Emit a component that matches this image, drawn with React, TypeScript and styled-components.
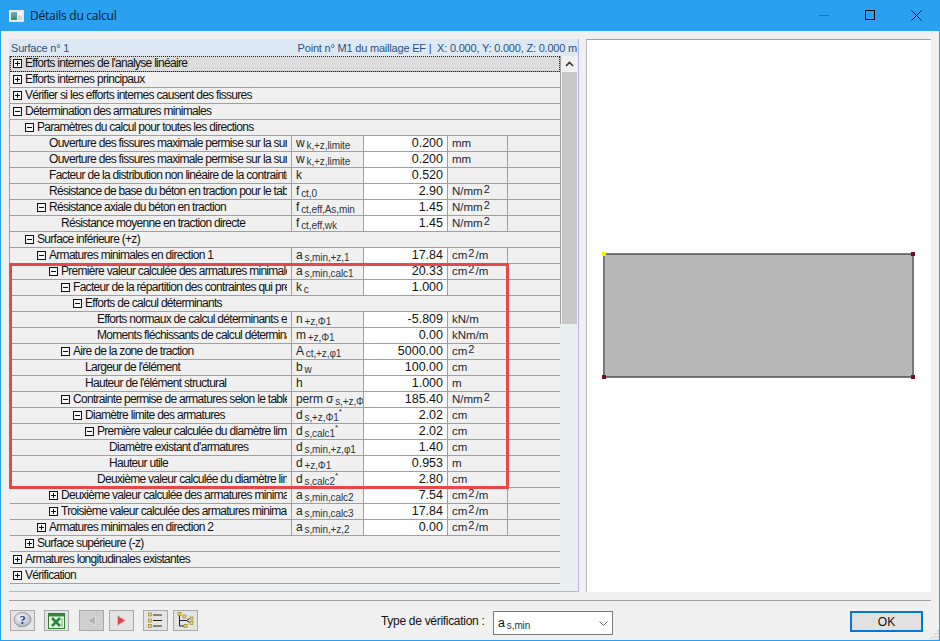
import React from "react";
import styled, { createGlobalStyle } from "styled-components";

const Global = createGlobalStyle`
  html, body { margin: 0; padding: 0; background: #f0f0f0; }
  body { font-family: "Liberation Sans", Arial, sans-serif; }
`;

const Win = styled.div`
  width: 940px; height: 641px; box-sizing: border-box; position: relative;
  display: flex; flex-direction: column; background: #f0f0f0;
  border: 1px solid #2aa0f0; border-top: 0; overflow: hidden; color: #111;
`;
const TitleBar = styled.div`
  height: 31px; flex: none; background: #2aa0f0; display: flex; align-items: center;
  margin: 0 -1px; padding-left: 9px;
`;
const Title = styled.span`
  margin-left: 6px; font: 12px "Open Sans", "Liberation Sans", sans-serif; letter-spacing: -0.25px; color: #101820;
`;
const WinButtons = styled.div`margin-left: auto; display: flex; padding-right: 1px;`;
const WinBtn = styled.div`
  width: 46px; height: 31px; display: flex; align-items: center; justify-content: center;
`;
const Main = styled.div`
  flex: none; height: 553px; margin: 8px 8px 0 8px; display: flex; gap: 7px;
`;
const Left = styled.div`
  width: 570px; flex: none; display: flex; flex-direction: column;
  border-right: 1px solid #b4b4e8; border-bottom: 1px solid #b4b4e8; box-sizing: border-box;
  position: relative;
`;
const Header = styled.div`
  height: 17px; flex: none; background: #dde8f5; display: flex; justify-content: space-between; align-items: center;
  padding: 0 1px 0 2px; font-size: 11px; color: #2c5078; letter-spacing: -0.2px;
`;
const Body = styled.div`flex: 1; display: flex; min-height: 0;`;
const Table = styled.div`
  width: 552px; flex: none; border-left: 1px solid #a0a0a0; border-right: 1px solid #a0a0a0; box-sizing: border-box;
`;
const Row = styled.div<{ $sel?: boolean }>`
  height: 16px; box-sizing: border-box; display: flex; position: relative;
  border-bottom: 1px solid #a0a0a0; background: ${p => (p.$sel ? "#dcdcdc" : "#f0f0f0")};
  ${p => p.$sel && "outline: 1px dotted #222; outline-offset: -1px;"}
`;
const NameCell = styled.div<{ $level: number; $toggle: boolean }>`
  width: 282px; flex: none; box-sizing: border-box; overflow: hidden; white-space: nowrap;
  display: flex; align-items: center; height: 15px; font-size: 12px; line-height: 15px; letter-spacing: -0.7px;
  padding-left: ${p => 3 + p.$level * 12 + (p.$toggle ? 0 : 12)}px;
  padding-right: 4px; border-right: 1px solid #a0a0a0;
`;
const GroupCell = styled(NameCell)`width: 100%; border-right: 0;`;
const Clip = styled.span`overflow: hidden; flex: 1; min-width: 0;`;
const Toggle = styled.svg`flex: none; width: 9px; height: 9px; margin-right: 3px;`;
const SymCell = styled.div`
  width: 72px; flex: none; box-sizing: border-box; padding-left: 4px; font-size: 12px; line-height: 15px; height: 15px;
  border-right: 1px solid #a0a0a0; white-space: nowrap; overflow: hidden; color: #222;
`;
const Main12 = styled.span`letter-spacing: -0.15px;`;
const Sub = styled.sub`
  font-size: 10px; vertical-align: baseline; position: relative; top: 2px; margin-left: 2px; line-height: 0; color: #2a3444; letter-spacing: -0.1px;
`;
const Sup = styled.sup`
  font-size: 8px; vertical-align: baseline; position: relative; top: -5px; line-height: 0;
`;
const ValueCell = styled.div`
  width: 84px; flex: none; box-sizing: border-box; background: #fff; text-align: right; padding-right: 4px;
  font-size: 12.5px; line-height: 15px; height: 15px; border-right: 1px solid #a0a0a0;
`;
const UnitCell = styled.div`
  width: 60px; flex: none; box-sizing: border-box; padding-left: 4px; font-size: 11.5px; line-height: 15px; height: 15px;
  border-right: 1px solid #a0a0a0; white-space: nowrap; color: #1c2430;
`;
const UnitSup = styled.span`
  font-size: 11px; vertical-align: baseline; position: relative; top: -2px; margin: 0 1px;
`;
const Scroll = styled.div`
  width: 15px; flex: none; margin-left: 1px; display: flex; flex-direction: column; height: 528px;
`;
const ScrollBtn = styled.div`
  height: 16px; flex: none; display: flex; align-items: center; justify-content: center;
`;
const Thumb = styled.div`height: 480px; flex: none; background: #c8c8c8;`;
const Track = styled.div`flex: 1;`;
const Strip = styled.div`flex: 1; background: #e9eef0;`;
const Highlight = styled.div`
  position: absolute; left: 0; top: 224px; width: 500px; height: 226px; box-sizing: border-box;
  border: 3px solid #e8474a; pointer-events: none;
`;
const Preview = styled.div`
  width: 345px; flex: none; background: #fff; border-top: 1px solid #a0a0a0; border-left: 1px solid #b8b8b8;
  box-sizing: border-box; height: 553px;
`;
const Sep = styled.div`height: 1px; flex: none; background: #a0a0a0; margin: 8px 8px 0 8px;`;
const Footer = styled.div`
  flex: 1; display: flex; align-items: flex-start; padding: 9px 8px 0 9px;
`;
const IconBtn = styled.div<{ $disabled?: boolean; $gap: number }>`
  width: 25px; height: 21px; box-sizing: border-box; flex: none; margin-right: ${p => p.$gap}px;
  border: 1px solid #a8a8a8; background: ${p => (p.$disabled ? "#cfcfcf" : "#e4e4e4")};
  display: flex; align-items: center; justify-content: center;
`;
const TypeLabel = styled.span`
  margin-left: 183px; width: 112px; flex: none; font-size: 12px; line-height: 22px; white-space: nowrap; letter-spacing: -0.3px;
`;
const Select = styled.div`
  width: 120px; height: 24px; box-sizing: border-box; flex: none; margin-top: 1px; border: 1px solid #7a7a7a; background: #fff;
  display: flex; align-items: center; justify-content: space-between; padding: 0 4px 0 4px; font-size: 12.5px;
`;
const OkBtn = styled.div`
  margin-left: 237px; width: 73px; height: 21px; box-sizing: border-box; flex: none; margin-top: 1px; border: 2px solid #0078d7; background: #e1e1e1;
  display: flex; align-items: center; justify-content: center; font-size: 12px;
`;
const Grip = styled.svg`position: absolute; right: 0; bottom: 0;`;

const Box = ({ open }: { open: boolean }) => (
  <Toggle viewBox="0 0 9 9">
    <rect x="0.5" y="0.5" width="8" height="8" fill="#f8f8f8" stroke="#111" />
    <path d={open ? "M2 4.5h5" : "M2 4.5h5M4.5 2v5"} stroke="#111" fill="none" />
  </Toggle>
);

type R = {
  l: number; t: string; o?: boolean; s?: React.ReactNode; v?: string; u?: React.ReactNode; sel?: boolean;
};
const S = ({ m, b, star }: { m: string; b: string; star?: boolean }) => (
  <>
    <Main12>{m}</Main12>
    <Sub>{b}</Sub>
    {star && <Sup>*</Sup>}
  </>
);
const Cm2m = () => (<>cm<UnitSup>2</UnitSup>/m</>);
const Cm2 = () => (<>cm<UnitSup>2</UnitSup></>);
const Nmm2 = () => (<>N/mm<UnitSup>2</UnitSup></>);

const rows: R[] = [
  { l: 0, t: "Efforts internes de l'analyse linéaire", o: false, sel: true },
  { l: 0, t: "Efforts internes principaux", o: false },
  { l: 0, t: "Vérifier si les efforts internes causent des fissures", o: false },
  { l: 0, t: "Détermination des armatures minimales", o: true },
  { l: 1, t: "Paramètres du calcul pour toutes les directions", o: true },
  { l: 2, t: "Ouverture des fissures maximale permise sur la surface", s: <S m="w" b="k,+z,limite" />, v: "0.200", u: "mm" },
  { l: 2, t: "Ouverture des fissures maximale permise sur la surface", s: <S m="w" b="k,+z,limite" />, v: "0.200", u: "mm" },
  { l: 2, t: "Facteur de la distribution non linéaire de la contrainte", s: "k", v: "0.520" },
  { l: 2, t: "Résistance de base du béton en traction pour le tableau", s: <S m="f" b="ct,0" />, v: "2.90", u: <Nmm2 /> },
  { l: 2, t: "Résistance axiale du béton en traction", o: true, s: <S m="f" b="ct,eff,As,min" />, v: "1.45", u: <Nmm2 /> },
  { l: 3, t: "Résistance moyenne en traction directe", s: <S m="f" b="ct,eff,wk" />, v: "1.45", u: <Nmm2 /> },
  { l: 1, t: "Surface inférieure (+z)", o: true },
  { l: 2, t: "Armatures minimales en direction 1", o: true, s: <S m="a" b="s,min,+z,1" />, v: "17.84", u: <Cm2m /> },
  { l: 3, t: "Première valeur calculée des armatures minimales", o: true, s: <S m="a" b="s,min,calc1" />, v: "20.33", u: <Cm2m /> },
  { l: 4, t: "Facteur de la répartition des contraintes qui précède", o: true, s: <S m="k" b="c" />, v: "1.000" },
  { l: 5, t: "Efforts de calcul déterminants", o: true },
  { l: 6, t: "Efforts normaux de calcul déterminants en traction", s: <S m="n" b="+z,Φ1" />, v: "-5.809", u: "kN/m" },
  { l: 6, t: "Moments fléchissants de calcul déterminants", s: <S m="m" b="+z,Φ1" />, v: "0.00", u: "kNm/m" },
  { l: 4, t: "Aire de la zone de traction", o: true, s: <S m="A" b="ct,+z,φ1" />, v: "5000.00", u: <Cm2 /> },
  { l: 5, t: "Largeur de l'élément", s: <S m="b" b="w" />, v: "100.00", u: "cm" },
  { l: 5, t: "Hauteur de l'élément structural", s: "h", v: "1.000", u: "m" },
  { l: 4, t: "Contrainte permise de armatures selon le tableau", o: true, s: <S m="perm σ" b="s,+z,Φ" />, v: "185.40", u: <Nmm2 /> },
  { l: 5, t: "Diamètre limite des armatures", o: true, s: <S m="d" b="s,+z,Φ1" star />, v: "2.02", u: "cm" },
  { l: 6, t: "Première valeur calculée du diamètre limite", o: true, s: <S m="d" b="s,calc1" star />, v: "2.02", u: "cm" },
  { l: 7, t: "Diamètre existant d'armatures", s: <S m="d" b="s,min,+z,φ1" />, v: "1.40", u: "cm" },
  { l: 7, t: "Hauteur utile", s: <S m="d" b="+z,Φ1" />, v: "0.953", u: "m" },
  { l: 6, t: "Deuxième valeur calculée du diamètre limite", s: <S m="d" b="s,calc2" star />, v: "2.80", u: "cm" },
  { l: 3, t: "Deuxième valeur calculée des armatures minimales", o: false, s: <S m="a" b="s,min,calc2" />, v: "7.54", u: <Cm2m /> },
  { l: 3, t: "Troisième valeur calculée des armatures minimales", o: false, s: <S m="a" b="s,min,calc3" />, v: "17.84", u: <Cm2m /> },
  { l: 2, t: "Armatures minimales en direction 2", o: false, s: <S m="a" b="s,min,+z,2" />, v: "0.00", u: <Cm2m /> },
  { l: 1, t: "Surface supérieure (-z)", o: false },
  { l: 0, t: "Armatures longitudinales existantes", o: false },
  { l: 0, t: "Vérification", o: false },
];

export default function App() {
  return (
    <>
      <Global />
      <Win>
        <TitleBar>
          <svg width="15" height="12" viewBox="0 0 15 12">
            <defs>
              <linearGradient id="tg" x1="0" y1="0" x2="0" y2="1">
                <stop offset="0" stopColor="#7fa8b4" />
                <stop offset="1" stopColor="#2f8a70" />
              </linearGradient>
            </defs>
            <rect x="0" y="0" width="15" height="12" fill="#dfe6e8" />
            <rect x="1" y="1" width="13" height="10" fill="#eef2f2" />
            <rect x="2" y="2" width="6" height="8" fill="url(#tg)" />
            <rect x="9" y="2" width="4" height="3" fill="#fff" />
            <rect x="9" y="6" width="4" height="4" fill="#cfd8dc" />
          </svg>
          <Title>Détails du calcul</Title>
          <WinButtons>
            <WinBtn>
              <svg width="11" height="11" viewBox="0 0 11 11"><path d="M0 5.5h10" stroke="#1478b8" /></svg>
            </WinBtn>
            <WinBtn>
              <svg width="11" height="11" viewBox="0 0 11 11"><rect x="0.5" y="0.5" width="9" height="9" fill="none" stroke="#000" /></svg>
            </WinBtn>
            <WinBtn>
              <svg width="11" height="11" viewBox="0 0 11 11"><path d="M.5.5l10 10M10.5.5l-10 10" stroke="#000" /></svg>
            </WinBtn>
          </WinButtons>
        </TitleBar>
        <Main>
          <Left>
            <Header>
              <span>Surface n° 1</span>
              <span>Point n° M1 du maillage EF | &nbsp;X: 0.000, Y: 0.000, Z: 0.000 m</span>
            </Header>
            <Body>
              <Table>
                {rows.map((r, i) => {
                  const tog = r.o !== undefined;
                  const inner = (
                    <>
                      {tog && <Box open={!!r.o} />}
                      <Clip>{r.t}</Clip>
                    </>
                  );
                  return (
                    <Row key={i} $sel={r.sel}>
                      {r.v === undefined ? (
                        <GroupCell $level={r.l} $toggle={tog}>{inner}</GroupCell>
                      ) : (
                        <>
                          <NameCell $level={r.l} $toggle={tog}>{inner}</NameCell>
                          <SymCell>{r.s}</SymCell>
                          <ValueCell>{r.v}</ValueCell>
                          <UnitCell>{r.u}</UnitCell>
                        </>
                      )}
                    </Row>
                  );
                })}
              </Table>
              <Scroll>
                <ScrollBtn>
                  <svg width="9" height="6" viewBox="0 0 9 6"><path d="M1 5l3.5-3.5L8 5" fill="none" stroke="#333" strokeWidth="1.6" /></svg>
                </ScrollBtn>
                <Thumb />
                <Track />
                <ScrollBtn>
                  <svg width="9" height="6" viewBox="0 0 9 6"><path d="M1 1l3.5 3.5L8 1" fill="none" stroke="#333" strokeWidth="1.6" /></svg>
                </ScrollBtn>
              </Scroll>
            </Body>
            <Strip />
            <Highlight />
          </Left>
          <Preview>
            <svg width="343" height="551" viewBox="0 0 343 551">
              <rect x="17" y="214" width="309" height="123" fill="#b8b8b8" />
              <path d="M17 214H326" stroke="#505050" strokeWidth="1.4" />
              <path d="M326 214V337" stroke="#787878" strokeWidth="2" />
              <path d="M17 214V337" stroke="#787878" strokeWidth="2" />
              <path d="M17 337H326" stroke="#505050" strokeWidth="1.4" />
              <rect x="15" y="212" width="4" height="4" fill="#f8f000" />
              <rect x="324" y="212" width="4" height="4" fill="#701018" />
              <rect x="15" y="335" width="4" height="4" fill="#701018" />
              <rect x="324" y="335" width="4" height="4" fill="#701018" />
            </svg>
          </Preview>
        </Main>
        <Sep />
        <Footer>
          <IconBtn $gap={9}>
            <svg width="19" height="17" viewBox="0 0 19 17">
              <defs>
                <radialGradient id="hg" cx="0.4" cy="0.35" r="0.8">
                  <stop offset="0" stopColor="#f4f6fa" />
                  <stop offset="1" stopColor="#a8aeb8" />
                </radialGradient>
              </defs>
              <path d="M6 13l-1 3.5 5-3z" fill="#b8bcc4" />
              <ellipse cx="9.5" cy="7.5" rx="8.5" ry="7" fill="url(#hg)" stroke="#9096a0" />
              <text x="9.5" y="12" textAnchor="middle" fontSize="12.5" fontWeight="700" fontFamily="Liberation Serif" fill="#27408b">?</text>
            </svg>
          </IconBtn>
          <IconBtn $gap={10}>
            <svg width="17" height="16" viewBox="0 0 17 16">
              <rect x="0.5" y="0.5" width="16" height="15" fill="#f0f6ec" stroke="#2e7d32" />
              <rect x="1" y="1" width="15" height="2.5" fill="#2e8b3a" />
              <path d="M4 5l8 8M12 5l-8 8" stroke="#1f8a38" strokeWidth="2.6" />
              <path d="M14 5v9" stroke="#6ab070" />
            </svg>
          </IconBtn>
          <IconBtn $gap={5} $disabled>
            <svg width="9" height="11" viewBox="0 0 9 11"><path d="M8.5.5v10L.5 5.5z" fill="#b4b4b4" stroke="#e0e0e0" /></svg>
          </IconBtn>
          <IconBtn $gap={9}>
            <svg width="9" height="11" viewBox="0 0 9 11"><path d="M.5.5v10l8-5z" fill="#e8404a" stroke="#d8b8b8" /></svg>
          </IconBtn>
          <IconBtn $gap={5}>
            <svg width="15" height="17" viewBox="0 0 15 17">
              <path d="M5 3h9M5 8.5h9M5 14h9" stroke="#222" strokeWidth="1.2" />
              <rect x="0.5" y="1" width="3" height="3" fill="#f0d850" stroke="#8a7a20" strokeWidth=".6" />
              <rect x="0.5" y="7" width="3" height="3" fill="#f0d850" stroke="#8a7a20" strokeWidth=".6" />
              <rect x="0.5" y="12.5" width="3" height="3" fill="#f0d850" stroke="#8a7a20" strokeWidth=".6" />
            </svg>
          </IconBtn>
          <IconBtn $gap={0}>
            <svg width="19" height="17" viewBox="0 0 19 17">
              <path d="M3.5 3v11h5M3.5 8.5h7l3-2M10.5 8.5l3 2" stroke="#222" fill="none" />
              <rect x="2" y="0.5" width="3" height="3" fill="#f0d850" stroke="#8a7a20" strokeWidth=".6" />
              <rect x="8" y="12.5" width="3" height="3" fill="#f0d850" stroke="#8a7a20" strokeWidth=".6" />
              <rect x="7" y="3" width="3" height="3" fill="#f0d850" stroke="#8a7a20" strokeWidth=".6" />
              <rect x="14" y="5" width="3" height="3" fill="#f0d850" stroke="#8a7a20" strokeWidth=".6" />
              <rect x="14" y="9.5" width="3" height="3" fill="#f0d850" stroke="#8a7a20" strokeWidth=".6" />
            </svg>
          </IconBtn>
          <TypeLabel>Type de vérification :</TypeLabel>
          <Select>
            <span><S m="a" b="s,min" /></span>
            <svg width="9" height="5" viewBox="0 0 9 5"><path d="M.5.5l4 4 4-4" fill="none" stroke="#666" /></svg>
          </Select>
          <OkBtn>OK</OkBtn>
        </Footer>
        <Grip width="11" height="11" viewBox="0 0 11 11">
          <path d="M11 1L1 11M11 4L4 11M11 7L7 11M11 10L10 11" stroke="#a8a8a8" strokeDasharray="1 1" />
        </Grip>
      </Win>
    </>
  );
}
